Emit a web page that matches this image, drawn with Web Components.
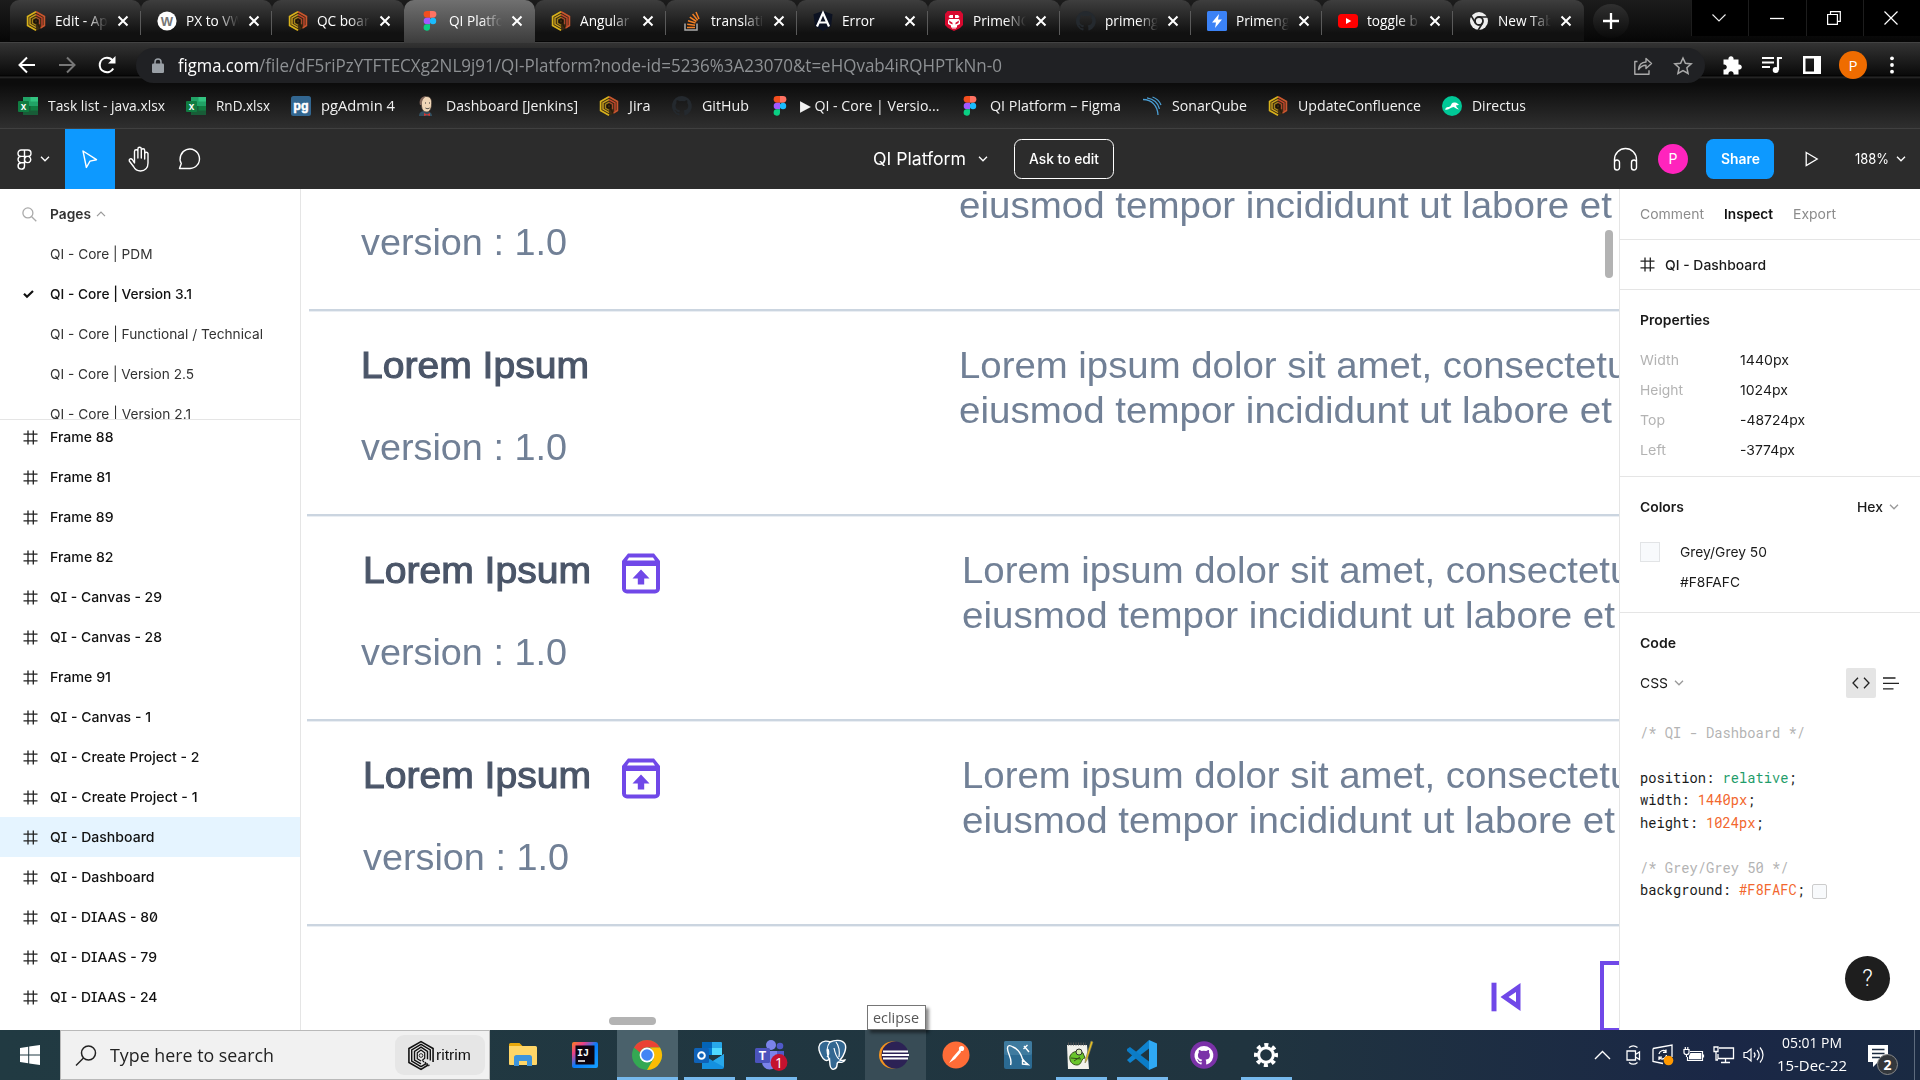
<!DOCTYPE html>
<html lang="en">
<head>
<meta charset="utf-8">
<title>QI Platform – Figma</title>
<style>
html,body{margin:0;height:100%;overflow:hidden;background:#fff}
</style>
</head>
<body>
<desktop-screen></desktop-screen>
<script>
const UI = '"Open Sans","Noto Sans",sans-serif';
const hexLogo = `<path d="M10 0l9 5v10l-9 5-9-5V5z" fill="#3a2a12"/><path d="M10 .8L1.6 5.4v9.2L10 19.2" fill="none" stroke="#d8b21c" stroke-width="1.7"/><path d="M10 .8l8.4 4.6v9.2l-4 2.3" fill="none" stroke="#c9562f" stroke-width="1.7"/><path d="M10 3.6L4 6.9v6.3l6 3.3" fill="none" stroke="#c9a01c" stroke-width="1.4"/><path d="M10 3.6l6 3.3v8" fill="none" stroke="#c8452f" stroke-width="1.4"/><path d="M10 6.2L6.4 8.2v4l3.6 2" fill="none" stroke="#a98a1a" stroke-width="1.1"/><path d="M10 6.2l3.6 2v5" fill="none" stroke="#b04c30" stroke-width="1.1"/><circle cx="10" cy="10.3" r="1.8" fill="none" stroke="#1a1208" stroke-width="1.2"/><path d="M11 12l3 5" stroke="#2a1a0a" stroke-width="1.4"/>`;
const figma = `<path d="M7 0h3v6.67H7a3.3 3.3 0 010-6.67z" fill="#f24e1e"/><path d="M10 0h3a3.3 3.3 0 010 6.67h-3z" fill="#ff7262"/><path d="M7 6.67h3v6.66H7a3.3 3.3 0 010-6.66z" fill="#a259ff"/><circle cx="13" cy="10" r="3.2" fill="#1abcfe"/><path d="M7 13.33h3V16.7a3.2 3.2 0 11-3-3.37z" fill="#0acf83"/>`;
const octo = c => `<path fill="${c}" d="M10 0a10 10 0 00-3.2 19.5c.5.1.7-.2.7-.5v-1.8c-2.8.6-3.4-1.2-3.4-1.2-.4-1.1-1.1-1.4-1.1-1.4-.9-.6.1-.6.1-.6 1 .1 1.5 1 1.5 1 .9 1.6 2.400 1.100 2.900.9.1-.7.4-1.100.6-1.400-2.200-.200-4.500-1.100-4.500-4.900 0-1.100.4-2 1-2.700-.1-.2-.4-1.200.1-2.600 0 0 .8-.3 2.700 1a9.500 9.500 0 015 0c1.900-1.300 2.700-1 2.700-1 .5 1.400.2 2.400.1 2.600.6.700 1 1.600 1 2.700 0 3.900-2.300 4.700-4.600 4.900.4.3.7.9.7 1.900V19c0 .3.2.6.7.5A10 10 0 0010 0z"/>`;
const line = (d, w=1.3, c='currentColor', x='') => `<path d="${d}" fill="none" stroke="${c}" stroke-width="${w}" ${x}/>`;
/* name: [width, height, viewBox, body] */
const ICONS = {
 hex:[20,20,'0 0 20 20',hexLogo],
 figma:[20,20,'0 0 20 20',figma],
 github:[20,20,'0 0 20 20',octo('#24292e')],
 wiki:[20,20,'0 0 20 20',`<circle cx="10" cy="10" r="9.6" fill="#fff"/><text x="10" y="14.600" text-anchor="middle" font-family="Liberation Sans" font-weight="700" font-size="13" fill="#777">W</text>`],
 stack:[20,20,'0 0 20 20',`<path d="M3 12.500V19h12v-6.500" fill="none" stroke="#aaa" stroke-width="1.500"/><path d="M5 16.500h8M5.200 13.300l7.800.9M6 9.800l7.500 2.200M7.800 6.200l6.600 4.300M10.600 3l5.100 6.200M14 1l3 7" stroke="#f48024" stroke-width="1.500"/>`],
 angular:[20,20,'0 0 20 20',`<path d="M10 0l9.500 3.300-1.500 12L10 20l-8-4.700L.5 3.300z" fill="#0c1222"/><path d="M4 15.500L10 2l6 13.500M6.300 11.500h7.400" fill="none" stroke="#fff" stroke-width="2.200"/>`],
 prime:[20,20,'0 0 20 20',`<path d="M3.500 0h13L19 3v11l-3 3-6 3-6-3-3-3V3z" fill="#d8092f"/><path d="M6 4h3v3H6L4.500 6zM11 4h3l1.500 2-1.500 1h-3zM5 8h10l1 2v3l-3 1.500v2h-1.500v1.500h-1v-1.500h-1V18h-1v-1.500H7v-2L4 13v-3z" fill="#fff"/><path d="M5 9.500l3.500 2.300v1.700L5.500 12zM15 9.500l-3.500 2.300v1.700l3-1.500z" fill="#d8092f"/>`],
 bolt:[20,20,'0 0 20 20',`<rect width="20" height="20" rx="1.500" fill="#3b82f6"/><path d="M12 3l-7 8.500h4L8 17l7-8.500h-4z" fill="#fff"/>`],
 youtube:[20,20,'0 0 20 20',`<rect y="3" width="20" height="14" rx="3.500" fill="#f00"/><path d="M8 7l5.300 3L8 13z" fill="#fff"/>`],
 chromeMono:[20,20,'0 0 20 20',`<circle cx="10" cy="10" r="9" fill="#eee"/><circle cx="10" cy="10" r="4" fill="#eee" stroke="#222" stroke-width="1.800"/><path d="M10 6h9M6.500 12L2 4.500M13.500 12L9 19.500" stroke="#222" stroke-width="1.600"/>`],
 excel:[20,20,'0 0 20 20',`<path d="M5 1h15v18H5z" fill="#21a366"/><path d="M12.500 1H20v4.500h-7.500z" fill="#33c481"/><path d="M5 10h15v9H5z" fill="#185c37"/><path d="M12.500 10H20v4.500h-7.500z" fill="#107c41"/><rect y="5" width="11" height="11" rx="1" fill="#107c41"/><text x="5.500" y="14" font-size="10" font-weight="700" text-anchor="middle" font-family="Liberation Sans" fill="#fff">x</text>`],
 pg:[20,20,'0 0 20 20',`<rect width="20" height="20" rx="2.500" fill="#326690"/><text x="10" y="13.800" font-size="12.500" font-weight="700" text-anchor="middle" font-family="Liberation Sans" fill="#fff" stroke="#fff" stroke-width=".5">pg</text>`],
 jenkins:[20,20,'0 0 20 20',`<path d="M3 20c0-4 3-5 6-5s7 1 7 5z" fill="#335061"/><path d="M5 6c0-4 3-6 6-5.500C15 1 16 4 15.500 9c-.3 4-2 7-4.500 7-3.500 0-5-2-5.500-6z" fill="#f0d6b7" stroke="#3c342c" stroke-width=".7"/><path d="M4 9C2.500 3 6 0 10.500.2 7.500 1.800 6 4 5.500 9z" fill="#81665a"/><path d="M8 17l3 1.500 3-1.500v3l-3-1-3 1z" fill="#d33833"/><path d="M9 7h1M13 7h1M9.500 12c1 .8 3 .8 4 0" stroke="#333" fill="none"/>`],
 sonar:[20,20,'0 0 20 20',line('M1 3.500C10 3.500 15.500 10 16 19M5 1.800c6 1 11 5 12.500 11M10.500 1C14.500 2.500 17.500 5 19 9',1.3,'#4b9fd5')],
 directus:[20,20,'0 0 20 20',`<circle cx="10" cy="10" r="10" fill="#00c897"/><path d="M3 13.500c2-4 4-1.500 5.500-3.500C9.500 8 10 6 13 6.500c2 0 2.500 1.500 4 2-1 1-2 .5-3 1 .5 2 1.500 2.500 3 4-3-.5-4-2-5.500-2.500C9 11 7 14.500 3 13.500z" fill="#fff"/>`],
 close:[12,12,'0 0 12 12',line('M1.500 1.500l9 9M10.500 1.500l-9 9',2,'#fff')],
 back:[18,18,'0 0 18 18',line('M17 9H2M9 1.500L1.500 9 9 16.500',2,'#fff')],
 fwd:[18,18,'0 0 18 18',line('M1 9h15M9 1.500L16.500 9 9 16.500',2,'#777')],
 reload:[18,18,'0 0 18 18',line('M15.200 12.500A7.200 7.200 0 119 1.800c2.600 0 4.600 1.200 6 3',2.100,'#fff')+`<path d="M17.500 0v7.500H10z" fill="#fff"/>`],
 lock:[12,16,'0 0 12 16',`<rect x="0" y="5.500" width="12" height="9.500" rx="1.300" fill="#9aa0a6"/>`+line('M3 6V4a3 3 0 016 0v2',1.5,'#9aa0a6')],
 share:[20,20,'0 0 20 20',line('M4.500 5.500H1.800v12.700H16v-4M5.500 13.500C6 8.500 9 6.200 13 6V2.500l5.500 5-5.500 5V9.300c-3.500 0-5.500 1.200-7.500 4.200z',1.4,'#aaa','stroke-linejoin="round"')],
 star:[20,20,'0 0 20 20',line('M10 2l2.400 5.300 5.800.6-4.300 3.900 1.200 5.700L10 14.600l-5.100 2.900 1.200-5.700L1.800 7.900l5.800-.6z',1.5,'#aaa')],
 puzzle:[20,20,'0 0 20 20',`<path d="M1.500 4.500h5a2.600 2.600 0 115 0h5v5a2.600 2.600 0 110 5v5h-5a2.600 2.600 0 10-5 0h-5v-5a2.600 2.600 0 100-5z" fill="#fff"/>`],
 music:[20,18,'0 0 20 18',line('M0 2h12M0 6.500h12M0 11h8',2,'#fff')+line('M16 14V2h4',2.200,'#fff')+`<circle cx="13.700" cy="14" r="3" fill="#fff"/>`],
 side:[18,18,'0 0 18 18',`<path d="M0 0h18v18H0zM2.500 2.500v13H11v-13z" fill="#fff" fill-rule="evenodd"/>`],
 dots:[6,18,'0 0 6 18',`<circle cx="3" cy="2.300" r="1.900" fill="#fff"/><circle cx="3" cy="9" r="1.900" fill="#fff"/><circle cx="3" cy="15.700" r="1.900" fill="#fff"/>`],
 plus:[16,16,'0 0 16 16',line('M8 0v16M0 8h16',2.300,'#fff')],
 wdown:[14,8,'0 0 14 8',line('M.5.5L7 7 13.500.5',1.100,'#eee')],
 wmin:[14,14,'0 0 14 14',line('M0 7.500h14',1.300,'#fff')],
 wmax:[14,14,'0 0 14 14',line('M.6 3.500h9.800v9.800H.6zM3.500 3.500V.6h9.800v9.800h-3',1.200,'#fff')],
 wclose:[14,14,'0 0 14 14',line('M.5.5l13 13M13.500.5l-13 13',1.200,'#fff')],
 fmenu:[15,21,'0 0 15 21',line('M7.500 1H4.200a3.200 3.200 0 000 6.400h3.300zM7.500 1h3.300a3.200 3.200 0 010 6.400H7.500zM7.500 7.400H4.200a3.100 3.100 0 000 6.300h3.300zM10.700 7.400a3.100 3.100 0 11-.1 0zM7.500 13.700H4.200a3.200 3.200 0 103.300 3.200z',1.4,'#fff')],
 chev:[10,6,'0 0 10 6',line('M1 .8l4 4 4-4',1.3)],
 chevup:[10,6,'0 0 10 6',line('M1 5.200l4-4 4 4',1.200)],
 cursor:[16,19,'0 0 16 19',line('M1 1l13.500 8.700-6.500 1.400L4.400 17.500z',1.400,'#fff','stroke-linejoin="round"')],
 hand:[24,26,'0 0 24 26',line('M6.500 15V5.500a1.700 1.700 0 013.400 0V12 3a1.700 1.700 0 013.400 0v9-7.500a1.700 1.700 0 013.400 0V13 7.500a1.700 1.700 0 013.300 0V17c0 5-3 8-7.500 8-3.500 0-5.500-1.500-7-4.500L1.300 15c-.6-2 1.700-3 3-1.500l2.200 3.500z',1.400,'#fff','stroke-linejoin="round"')],
 comment:[24,22,'0 0 24 22',line('M1.500 20.500l1.800-5A9.700 9.700 0 1112 20.500z',1.400,'#fff','stroke-linejoin="round"')],
 phones:[25,23,'0 0 25 23',line('M1.500 19v-7.500a11 11 0 0122 0V19M1.500 16.500v-2a2.500 2.500 0 015 0v5a2.500 2.500 0 01-5 0zM23.500 16.500v-2a2.500 2.500 0 00-5 0v5a2.500 2.500 0 005 0z',1.400,'#fff')],
 play:[14,16,'0 0 14 16',line('M1.200 1.500l11 6.500-11 6.500z',1.300,'#fff')],
 hash:[15,15,'0 0 15 15',line('M5 .5v14M10.300.5v14M.5 4.200h14M.5 10.800h14',1.300,'#222')],
 search:[15,15,'0 0 15 15',line('M9.700 9.700l4.600 4.600',1.300,'#aaa')+`<circle cx="5.900" cy="5.900" r="5" fill="none" stroke="#aaa" stroke-width="1.300"/>`],
 check:[11,8,'0 0 11 8',line('M1 3.800l3 3L10 1',2.200,'#111')],
 code:[18,12,'0 0 18 12',line('M6 .8L1 6l5 5.200M12 .8L17 6l-5 5.200',1.300,'#222')],
 list:[16,13,'0 0 16 13',line('M0 1h12.500M0 6.300h16M0 11.800h10.500',1.300,'#222')],
 archive:[40,41,'0 0 40 41',`<path d="M7 .5h26l6 7.500v27.500a5 5 0 01-5 5H6a5 5 0 01-5-5V8zM5 13v22.500c0 .6.400 1 1 1h28c.6 0 1-.4 1-1V13zM8 4.500L6 7.500h28l-2-3z" fill="#7048e8" fill-rule="evenodd"/><path d="M20 16.500l8.500 9h-5.300v6h-6.400v-6h-5.300z" fill="#7048e8"/>`],
 prev:[30,30,'0 0 30 30',`<path d="M.5.700h5v28.600h-5z" fill="#7048e8"/><path d="M29.500 1v28L9.500 15zM25 10l-7.500 5L25 20z" fill="#7048e8" fill-rule="evenodd"/>`],
 win:[20,20,'0 0 20 20',`<path d="M0 2.900l8.200-1.200v7.700H0zM9.200 1.500L20 0v9.400H9.200zM0 10.500h8.200v7.800L0 17.100zM9.200 10.500H20V20L9.200 18.500z" fill="#fff"/>`],
 magnify:[22,21,'0 0 22 21',`<circle cx="13.500" cy="8" r="7" fill="none" stroke="#222" stroke-width="1.500"/>`+line('M8.500 13L1 20.500',1.5,'#222')],
 ritrim:[26,31,'0 0 28 32',line('M22 26l-8 5-13-7.500V8.500L14 1l13 7.500V23',1.700,'#111')+line('M20 24.500l-6 3.500L4 22V10l10-6 10 6v11.500',1.500,'#111')+line('M14 25l-7-4v-9.500L14 7l7 4.500V20',1.500,'#111')+line('M14 22l-4-2.500v-6.500l4-3 4 3V19l-3 2.500',1.300,'#111')+`<circle cx="14" cy="16" r="2" fill="none" stroke="#111" stroke-width=".9"/>`+line('M16 22l7 5',1.800,'#111','stroke-dasharray="1.500 1"')],
 explorer:[28,26,'0 0 28 26',`<path d="M0 2.500A1.500 1.500 0 011.500 1h9l3 3H0z" fill="#e8a90c"/><path d="M0 4h26.500A1.500 1.500 0 0128 5.500V22a1 1 0 01-1 1H1a1 1 0 01-1-1z" fill="#ffd667"/><path d="M5 24V15.500A2.500 2.500 0 017.500 13h13a2.500 2.500 0 012.500 2.500V24h-5v-5h-8v5z" fill="#3d94dc"/>`],
 idea:[28,28,'0 0 28 28',`<defs><linearGradient id="g" x1="0" y1="0" x2="1" y2="1"><stop offset="0" stop-color="#fc801d"/><stop offset=".25" stop-color="#e8408a"/><stop offset=".5" stop-color="#087cfa"/><stop offset="1" stop-color="#16a0ff"/></linearGradient></defs><rect x="1" y="1" width="26" height="26" rx="2" fill="url(#g)"/><rect x="4.500" y="4.500" width="19" height="19" fill="#0c0410"/><text x="6" y="14.500" font-size="10" font-weight="700" font-family="Liberation Mono" fill="#fff">IJ</text><path d="M7 20h7" stroke="#fff" stroke-width="1.500"/>`],
 chrome:[30,30,'0 0 30 30',`<circle cx="15" cy="15" r="15" fill="#34a853"/><path d="M15 0a15 15 0 0113 7.500H15a7.500 7.500 0 00-7 5L2 7.500A15 15 0 0115 0z" fill="#ea4335"/><path d="M28 7.500A15 15 0 0115 30l6.500-11.200c1.500-3.500.5-8.500-3.500-11.300z" fill="#fbbc04"/><circle cx="15" cy="15" r="7.400" fill="#fff"/><circle cx="15" cy="15" r="5.800" fill="#4285f4"/>`],
 outlook:[30,28,'0 0 30 28',`<path d="M8 1h19a1 1 0 011 1v12H8z" fill="#28a8ea"/><path d="M8 1h10v6H8z" fill="#0364b8"/><path d="M18 7h10v7H18z" fill="#50d9ff"/><path d="M8 7h10v7H8z" fill="#0078d4"/><path d="M8 13l11 7 11-7v13a2 2 0 01-2 2H8z" fill="#1490df"/><path d="M30 13v13L19 20z" fill="#28a8ea"/><rect y="7" width="15" height="15" rx="1.500" fill="#0f62b8"/><circle cx="7.500" cy="14.500" r="3.300" fill="none" stroke="#fff" stroke-width="2"/>`],
 teams:[34,32,'0 0 34 32',`<circle cx="17" cy="6" r="5" fill="#7b83eb"/><circle cx="26" cy="7" r="3.300" fill="#5059c9"/><path d="M20 12h10v9a5 5 0 01-10 3z" fill="#5059c9"/><path d="M8 12h15v11a7.500 7.500 0 01-15 0z" fill="#7b83eb"/><rect x="1" y="9" width="15" height="15" rx="1.500" fill="#4b53bc"/><text x="8.500" y="21" text-anchor="middle" font-size="12" font-weight="700" font-family="Liberation Sans" fill="#fff">T</text><circle cx="25" cy="23.500" r="8.400" fill="#c4122f"/><text x="25" y="28.500" text-anchor="middle" font-size="14" font-family="Open Sans" fill="#fff">1</text>`],
 postgres:[30,30,'0 0 30 30',`<path d="M3 4c3-4 8-3 10-2 4-2 12-3 15 2 2 4-1 12-5 16 2 1 4 0 5 0-1 2-4 3-6 2-1 0-2 1-2 3 0 4-6 7-7 0l-.5-6c-3 3-6 1-8-3S.5 8 3 4z" fill="#336791" stroke="#fff" stroke-width="1.400"/>`+line('M13 2c-4 5-3 12-1 17M19 2c3 4 4 8 3 15M10 17c3-3 1-8 1-8M17 8c1 5 2 9 5 11',1.200,'#fff')],
 eclipse:[30,28,'0 0 30 28',`<circle cx="13.500" cy="14" r="13.500" fill="#f7941e"/><circle cx="16" cy="14" r="13.500" fill="#2c2255"/><path d="M4 10.500h25M3 14h27M4 17.500h25" stroke="#fff" stroke-width="1.900"/>`],
 postman:[28,28,'0 0 28 28',`<circle cx="14" cy="14" r="13.500" fill="#ff6c37"/><path d="M18 8l-7 8-4 6 6-4 6-7z" fill="#fff"/><circle cx="19.500" cy="7.500" r="2.600" fill="#fff"/>`],
 mysql:[28,28,'0 0 28 28',`<rect width="28" height="28" rx="2" fill="#2b6a92"/><rect width="28" height="14" rx="2" fill="#3f7b9f"/>`+line('M6.500 24C9 18 3 12 3.500 7c0-3 2.500-3 5.500-1 5 2 8 7 9.500 12 2 3 3.500 4 5.500 5.500l-5.500-.5v-4M20 5l5 6M19.500 8l4-4',1.400,'#fff')],
 npp:[28,29,'0 0 28 29',`<path d="M1 4h20l2 24H2z" fill="#f2f2ec"/><path d="M2 3h18" stroke="#555" stroke-width="3" stroke-dasharray="1 1.500"/><path d="M4 15c3-6 9-5 13-3l2 5c-4 0-3 7-8 7s-8-4-7-9z" fill="#69c52b" stroke="#335018"/><circle cx="13" cy="11" r="3" fill="#cfe8a5" stroke="#333"/><path d="M5 17l10 1M8 20l6-4" stroke="#335018"/><path d="M27 1l-6 18-2 3 .5-4L25 0z" fill="#e8c020" stroke="#775" stroke-width=".6"/>`],
 vscode:[30,30,'0 0 30 30',`<path d="M22 0L0 20l3 3L22 8.500z" fill="#0f83cf"/><path d="M0 9l3-2 19 14.500V30L0 11z" fill="#0b7cc7"/><path d="M22 0l8 3.500v23L22 30z" fill="#2fa9f5"/>`],
 ghdesk:[28,28,'0 0 28 28',`<circle cx="14" cy="14" r="13.800" fill="#7b32a8"/><g transform="translate(4.500 5) scale(.95)">${octo('#fff')}</g>`],
 gear:[24,24,'0 0 24 24',`<circle cx="12" cy="12" r="7.300" fill="none" stroke="#fff" stroke-width="3"/><circle cx="12" cy="12" r="10" fill="none" stroke="#fff" stroke-width="4" stroke-dasharray="3.900 3.950" transform="rotate(-11 12 12)"/>`],
 tup:[17,10,'0 0 17 10',line('M1 9l7.500-7.500L16 9',1.400,'#fff')],
 tcam:[15,20,'0 0 15 20',line('M1 6h8.500v9H1zM9.500 9.500L13.500 7v7.500l-4-2.500M3 2.500C5.500.5 9 .5 11.500 2.500M3 17.500c2.500 2 6 2 8.500 0',1.300,'#fff')],
 tupd:[22,22,'0 0 22 22',line('M1 4.500L20 1v12M1 4.500V17.500l10 2M7 10a4.300 4.300 0 017-2.500M14 5.500v2.800h-3M14.500 11a4.300 4.300 0 01-7 3M7 16v-2.800h3',1.300,'#fff')+`<circle cx="16.500" cy="16.500" r="4.800" fill="#ff9800"/>`],
 tbat:[22,18,'0 0 22 18',line('M7 5.500h12.500v9H4.500V11M20.500 8.500v3M1 3.500h5v3c0 1.500-1 2-2.500 2S1 8 1 6.500zM2.300 1v2.500M4.800 1v2.500M3.500 8.500V11',1.200,'#fff')+`<path d="M7.500 7h10.800v6.200H6V10z" fill="#fff"/>`],
 tnet:[22,18,'0 0 22 18',line('M6 2h14.500v10.500H5V8M12.500 12.500V16M8 16.500h9M1 1h4v4.500H1zM3 5.500V14h2',1.300,'#fff')],
 tvol:[22,18,'0 0 22 18',line('M1 6.500h3L8 3v12l-4-3.500H1zM11 6.500c1.300 1.500 1.300 3.500 0 5M14 4c2.600 3 2.600 7 0 10M17 1.500c4 4.500 4 10.500 0 15',1.200,'#fff')],
 note:[21,23,'0 0 21 23',`<path d="M0 0h20v17H10l-5 5v-5H0z" fill="#fff"/><path d="M4 4.500h12.500M4 8.500h12.500M4 12.500h8" stroke="#1b2a3f" stroke-width="1.300"/>`],
};
const def = (tag, fn, after) => customElements.define(tag, class extends HTMLElement {
  connectedCallback() {
    if (this.shadowRoot) return;
    this.attachShadow({mode:'open'}).innerHTML = fn(this);
    if (after) after(this);
  }
});
const a = (e, n, d='') => e.getAttribute(n) ?? d;

def('ui-icon', e => { const [w,h,v,b] = ICONS[a(e,'name')];
  return `<style>:host{display:inline-block;flex:none;width:${w}px;height:${h}px}svg{display:block;overflow:visible}</style><svg width="${w}" height="${h}" viewBox="${v}">${b}</svg>`; });

/* One line of text set to a given advance width (w) or to a horizontal ratio (k). */
def('fit-text', () => `<style>:host{display:block;flex:none;white-space:nowrap}span{display:inline-block;transform-origin:0 50%}</style><span><slot></slot></span>`, e => {
  const s = e.shadowRoot.querySelector('span'), n = s.getBoundingClientRect().width;
  const w = e.hasAttribute('w') ? +a(e,'w') : n * +a(e,'k',1);
  e.style.width = w + 'px';
  s.style.transform = `scaleX(${w/n})`;
});

def('browser-tab', e => `<style>
:host{display:block;flex:none;width:131.2px;height:41px;box-sizing:border-box;position:relative}
.t{box-sizing:border-box;height:41px;border-radius:9px 9px 0 0;background:linear-gradient(#3e3e3e,#111 80%);display:flex;align-items:center;padding-left:16px;border-right:1px solid transparent;color:#fff;font:15px/20px ${UI}}
:host([active]) .t{background:linear-gradient(#707070,#3c3c3c);height:43px;border-radius:10px 10px 0 0;padding-bottom:2px}
.n{width:53px;margin:-2px 0 0 9px;overflow:hidden;-webkit-mask:linear-gradient(90deg,#000 60%,transparent 100%)}
ui-icon[name=close]{margin-left:9px}
i{position:absolute;right:0;top:11px;width:1px;height:24px;background:#5a5a5a}
:host([active]) i,:host([nosep]) i{display:none}
</style><div class="t"><ui-icon name="${a(e,'icon')}"></ui-icon><div class="n"><fit-text k=".91">${a(e,'label')}</fit-text></div><ui-icon name="close"></ui-icon></div><i></i>`);

def('chrome-tabs', () => `<style>
:host{display:flex;background:linear-gradient(#1c1c1c,#060606);padding-left:10px;border-bottom:1px solid #434343;box-sizing:border-box;height:43px}
.plus{width:36px;height:34px;border-radius:50%;background:linear-gradient(#303030,#0a0a0a);display:grid;place-items:center;margin:4px 0 0 9px}
.win{margin-left:auto;display:flex;background:#000;height:36px}
.win div{width:57.2px;box-sizing:border-box;border-left:1px solid #1d1d1d;display:grid;place-items:center}
.win ui-icon{margin-left:-2px}
</style>
${[['hex','Edit - App'],['wiki','PX to VW'],['hex','QC board','nosep'],['figma','QI Platform','active'],['hex','Angular'],['stack','translation'],['angular','Error'],['prime','PrimeNG'],['github','primeng'],['bolt','Primeng'],['youtube','toggle b'],['chromeMono','New Tab','nosep']].map(([i,l,x=''])=>`<browser-tab icon="${i}" label="${l}" ${x}></browser-tab>`).join('')}
<div class="plus"><ui-icon name="plus"></ui-icon></div>
<div class="win"><div><ui-icon name="wdown"></ui-icon></div><div><ui-icon name="wmin"></ui-icon></div><div><ui-icon name="wmax"></ui-icon></div><div><ui-icon name="wclose"></ui-icon></div></div>`);

def('address-bar', () => `<style>
:host{display:flex;height:41px;position:relative;align-items:flex-start;padding:5px 0 0 18px;box-sizing:border-box;background:linear-gradient(#333 0,#0a0a0a 32px,#000 33px,#2c2c2c 34px,#0c0c0c 36px,#0c0c0c)}
.nav{display:flex;gap:22px;height:34px;align-items:center;width:118px}
.pill{width:1569px;height:35px;border-radius:18px;background:#202124;display:flex;align-items:center;box-sizing:border-box;padding:0 12px 0 16px;font:17.500px/24px ${UI};color:#8d9093}
.pill fit-text{margin-top:-2px}
.pill fit-text:first-of-type{margin-left:14px;color:#fff}
.r{margin-left:auto;display:flex;gap:20px}
.x{display:flex;align-items:center;height:34px;margin-left:17px}
.p{width:28px;height:28px;border-radius:50%;background:#ef6c00;color:#fff;font:15px/28px ${UI};text-align:center}
</style><div class="nav"><ui-icon name="back"></ui-icon><ui-icon name="fwd"></ui-icon><ui-icon name="reload"></ui-icon></div>
<div class="pill"><ui-icon name="lock"></ui-icon><fit-text w="81">figma.com</fit-text><fit-text w="743">/file/dF5riPzYTFTECXg2NL9j91/QI-Platform?node-id=5236%3A23070&amp;t=eHQvab4iRQHPTkNn-0</fit-text><div class="r"><ui-icon name="share"></ui-icon><ui-icon name="star"></ui-icon></div></div>
<div class="x"><ui-icon name="puzzle"></ui-icon><ui-icon name="music" style="margin-left:20px"></ui-icon><ui-icon name="side" style="margin-left:21px"></ui-icon><div class="p" style="margin-left:18px">P</div><ui-icon name="dots" style="margin-left:22px"></ui-icon></div>`);

def('bookmarks-bar', () => `<style>
:host{display:flex;gap:21px;height:45px;box-sizing:border-box;padding:0 18px;align-items:center;background:linear-gradient(#0c0c0c,#2f2f2f);border-bottom:1px solid #404040;font:15px/22px ${UI};color:#f1f1f1}
div{display:flex;gap:10px;align-items:center}
fit-text{margin-top:-2px}
</style>${[['excel','Task list - java.xlsx',117],['excel','RnD.xlsx',54],['pg','pgAdmin 4',74],['jenkins','Dashboard [Jenkins]',132],['hex','Jira',21.5],['github','GitHub',47],['figma','<span style="font-family:DejaVu Sans">▶</span> QI - Core | Versio...',139.5],['figma','QI Platform – Figma',131],['sonar','SonarQube',75],['hex','UpdateConfluence',123],['directus','Directus',54]].map(([i,l,w])=>`<div><ui-icon name="${i}"></ui-icon><fit-text w="${w}">${l}</fit-text></div>`).join('')}`);

def('figma-toolbar', () => `<style>
:host{display:flex;height:60px;background:#2c2c2c;color:#fff;font:14px/20px Inter,sans-serif}
.l,.m,.r{display:flex;align-items:center}
.l{width:873px}.r{flex:1;justify-content:flex-end}
.cur{width:50px;height:60px;background:#0d99ff;display:grid;place-items:center;margin-left:15px}
.b{box-sizing:border-box;height:40px;border-radius:7.500px;display:grid;place-items:center;font-weight:500;padding-bottom:1px}
.ask{width:100px;border:1.300px solid #fff;margin-left:26px}
.share{width:68px;background:#0d99ff;margin-left:18px;font-weight:600}
.p{width:30px;height:30px;border-radius:50%;background:#ff24bd;text-align:center;line-height:30px;margin-left:20px}
</style>
<div class="l"><ui-icon name="fmenu" style="margin-left:17px"></ui-icon><ui-icon name="chev" style="margin-left:8px"></ui-icon><div class="cur"><ui-icon name="cursor"></ui-icon></div><ui-icon name="hand" style="margin-left:13px"></ui-icon><ui-icon name="comment" style="margin-left:26px"></ui-icon></div>
<div class="m"><fit-text w="93" style="font-size:17.500px">QI Platform</fit-text><ui-icon name="chev" style="margin-left:12px"></ui-icon><div class="b ask"><fit-text w="70">Ask to edit</fit-text></div></div>
<div class="r"><ui-icon name="phones"></ui-icon><div class="p">P</div><div class="b share"><fit-text w="39">Share</fit-text></div><ui-icon name="play" style="margin-left:31px"></ui-icon><fit-text w="34" style="margin-left:36px">188%</fit-text><ui-icon name="chev" style="margin:0 14px 0 7px"></ui-icon></div>`);

def('page-row', e => `<style>
:host{display:flex;height:40px;align-items:center;color:#333}
:host([current]){color:#111;font-weight:500}
div{width:50px;padding-left:23px;box-sizing:border-box;display:flex}
</style><div>${e.hasAttribute('current')?'<ui-icon name="check"></ui-icon>':''}</div><fit-text w="${a(e,'w')}"><slot></slot></fit-text>`);
def('layer-row', e => `<style>
:host{display:flex;height:40px;align-items:center;color:#111;font-weight:500;font-feature-settings:"cv08","zero"}
:host([selected]){background:#e5f4ff}
ui-icon{margin:0 12px 0 23px}
</style><ui-icon name="hash"></ui-icon><fit-text w="${a(e,'w')}"><slot></slot></fit-text>`);

def('left-panel', () => `<style>
:host{display:flex;flex-direction:column;width:300px;border-right:1px solid #e5e5e5;background:#fff;font:13.750px/20px Inter,sans-serif}
.pages{height:230px;overflow:hidden;border-bottom:1px solid #e5e5e5;flex:none}
.h{display:flex;align-items:center;height:50px;color:#333;font-weight:600;padding:0 0 0 22px;box-sizing:border-box;margin-bottom:-5px}
.layers{flex:1;overflow:hidden}.in{margin-top:-3px}
</style>
<div class="pages"><div class="h"><ui-icon name="search"></ui-icon><fit-text w="41" style="margin-left:13px">Pages</fit-text><ui-icon name="chevup" style="margin-left:5px;color:#999"></ui-icon></div>
<page-row w="102.500">QI - Core | PDM</page-row><page-row w="142" current>QI - Core | Version 3.1</page-row><page-row w="213">QI - Core | Functional / Technical</page-row><page-row w="144">QI - Core | Version 2.5</page-row><page-row w="141">QI - Core | Version 2.1</page-row></div>
<div class="layers"><div class="in">${[['Frame 88',63.5],['Frame 81',61],['Frame 89',63.5],['Frame 82',63.5],['QI - Canvas - 29',112],['QI - Canvas - 28',112],['Frame 91',61],['QI - Canvas - 1',101],['QI - Create Project - 2',149.5],['QI - Create Project - 1',147.5],['QI - Dashboard',104.5,1],['QI - Dashboard',104.5],['QI - DIAAS - 80',108],['QI - DIAAS - 79',107],['QI - DIAAS - 24',107.5]].map(([t,w,s])=>`<layer-row w="${w}" ${s?'selected':''}>${t}</layer-row>`).join('')}</div></div>`);

def('canvas-row', e => { const x=+a(e,'tx'), v=+a(e,'vx'), d=+a(e,'dx'), m=+a(e,'lx',6);
 return `<style>
:host{display:block;height:205px;box-sizing:border-box;border:0;font:37.600px/45px "Liberation Sans",Arial,sans-serif;color:#718096}
.ln{height:2px;background:#cbd5e0;border-bottom:1px solid #eaeef3;margin-left:${m}px}
.g{display:flex;padding-top:31px}
.c{width:${d}px;flex:none}
.t{display:flex;color:#4a5568;-webkit-text-stroke:1.100px #4a5568;height:45px;margin-left:${x}px}
ui-icon{margin:5px 0 0 30px}
.v{margin:37px 0 0 ${v}px}
</style><div class="ln"></div><div class="g"><div class="c"><div class="t"><fit-text w="228">Lorem Ipsum</fit-text>${e.hasAttribute('archive')?'<ui-icon name="archive"></ui-icon>':''}</div><div class="v"><fit-text w="206">version : 1.0</fit-text></div></div><div><fit-text w="682">Lorem ipsum dolor sit amet, consectetur</fit-text><fit-text w="653">eiusmod tempor incididunt ut labore et</fit-text></div></div>`; });

def('design-canvas', () => `<style>
:host{display:block;position:relative;width:1318px;overflow:hidden;background:#fff}
.in{margin-top:-85px}
.end{height:2px;background:#cbd5e0;border-bottom:1px solid #eaeef3;margin-left:6px}
.pg{position:absolute;left:1190px;top:793px}
.box{position:absolute;left:1299px;top:772px;width:120px;height:63px;border:4px solid #7048e8}
.sb{position:absolute;background:#b3b3b3;border-radius:4px}
</style><div class="in"><canvas-row tx="59.500" vx="60" dx="658"></canvas-row><canvas-row tx="59.500" vx="60" dx="658" lx="8"></canvas-row><canvas-row archive tx="62" vx="60" dx="660.500"></canvas-row><canvas-row archive tx="62" vx="62" dx="660.500"></canvas-row><div class="end"></div></div>
<ui-icon class="pg" name="prev"></ui-icon><div class="box"></div>
<div class="sb" style="left:1304px;top:41px;width:8px;height:48px"></div><div class="sb" style="left:308px;top:828px;width:47px;height:8px"></div>`);

def('prop-row', e => `<style>:host{display:flex;height:30px;align-items:center;color:#1a1a1a}.k{width:100px;color:#b3b3b3}</style><div class="k"><fit-text w="${a(e,'kw')}">${a(e,'k')}</fit-text></div><fit-text w="${a(e,'w')}"><slot></slot></fit-text>`);

def('inspect-panel', () => `<style>
:host{display:block;position:relative;width:300px;border-left:1px solid #e5e5e5;background:#fff;font:13.750px/20px Inter,sans-serif;color:#1a1a1a}
.s{border-bottom:1px solid #e5e5e5;padding:0 20px;box-sizing:border-box}
.f{display:flex;align-items:center}
.b{font-weight:600}
.tabs{height:51px;gap:20px;color:#8c8c8c}
.sw{width:18px;height:18px;border:1px solid #e2e4e6;background:#f8fafc;margin-right:20px}
.btn{width:30px;height:30px;border-radius:2px;background:#e5e5e5;display:grid;place-items:center;margin-left:auto}
pre{margin:23.500px 0 0;font:13.750px/22.500px "Roboto Mono","Liberation Mono",monospace;color:#1a1a1a}
pre i{font-style:normal;color:#b3b3b3}pre b{font-weight:400;color:#f2672e}pre u{text-decoration:none;color:#1f9d6b}
pre s{display:inline-block;width:13px;height:13px;border:1px solid #ccc;border-radius:2px;background:#f8fafc;margin-left:7px;vertical-align:-4px}
.q{position:absolute;right:30px;bottom:29px;width:45px;height:45px;border-radius:50%;background:#1e1e1e;color:#fff;text-align:center;font:300 23px/45px Roboto,"Open Sans",sans-serif}
</style>
<div class="s f tabs"><fit-text w="64">Comment</fit-text><fit-text class="b" w="49" style="color:#111">Inspect</fit-text><fit-text w="43">Export</fit-text></div>
<div class="s f" style="height:50px"><ui-icon name="hash"></ui-icon><fit-text w="101" style="margin-left:10px;font-weight:500">QI - Dashboard</fit-text></div>
<div class="s" style="height:187px;padding-top:20px"><fit-text class="b" w="70" style="margin-bottom:15px">Properties</fit-text>
<prop-row k="Width" kw="39" w="49">1440px</prop-row><prop-row k="Height" kw="43" w="48">1024px</prop-row><prop-row k="Top" kw="25" w="65">-48724px</prop-row><prop-row k="Left" kw="26" w="55">-3774px</prop-row></div>
<div class="s" style="height:136px;padding-top:20px"><div class="f"><fit-text class="b" w="44">Colors</fit-text><fit-text w="26" style="margin-left:auto;font-weight:500">Hex</fit-text><ui-icon name="chev" style="color:#999;margin:0 1px 0 6px"></ui-icon></div>
<div class="f" style="height:30px;margin-top:20px"><div class="sw"></div><fit-text w="87">Grey/Grey 50</fit-text></div><div class="f" style="height:30px;padding-left:40px"><fit-text w="60">#F8FAFC</fit-text></div></div>
<div style="padding:20px 20px 0"><fit-text class="b" w="36">Code</fit-text>
<div class="f" style="height:30px;margin-top:15px"><fit-text w="28">CSS</fit-text><ui-icon name="chev" style="color:#999;margin-left:6px"></ui-icon><div class="btn"><ui-icon name="code"></ui-icon></div><ui-icon name="list" style="margin:0 1px 0 7px"></ui-icon></div>
<pre><i>/* QI - Dashboard */</i>

position: <u>relative</u>;
width: <b>1440px</b>;
height: <b>1024px</b>;

<i>/* Grey/Grey 50 */</i>
background: <b>#F8FAFC</b>;<s></s></pre></div><div class="q">?</div>`);

def('task-bar', () => `<style>
:host{display:flex;position:relative;height:50px;background:linear-gradient(90deg,#213a42,#20343f 65%,#1a2746 90%,#1a2a42);color:#fff;font-family:${UI}}
.w{width:60px;display:grid;place-items:center}
.s{width:430px;box-sizing:border-box;border:1px solid #b9b9b9;background:#f1f1f1;display:flex;align-items:center;padding:0 4px 0 14px;color:#222;font-size:18.750px;line-height:26px}
.rt{margin-left:auto;width:90px;height:40px;border-radius:9px;background:#e6e6e6;display:flex;align-items:center;gap:2px;padding-left:13px;box-sizing:border-box;font-size:15px;color:#111}
.apps{display:flex;gap:.9px;margin-left:3.500px}
.a{width:61px;display:grid;place-items:center;position:relative;box-sizing:border-box}
.a ui-icon{margin-left:-2px}
.on{background:linear-gradient(#76b9ed,#76b9ed) 50% 100%/51px 3px no-repeat}
.act{background:linear-gradient(#76b9ed,#76b9ed) 50% 100%/61px 3px no-repeat,#4a616b}
.hov{background:#384c56}
.tray{margin-left:auto;display:flex;align-items:center;padding-right:5px}
.clock{margin-left:12px;width:70px;display:flex;flex-direction:column;align-items:center;font-size:15px;line-height:23px;padding-bottom:2px}
.n{position:relative;margin-left:21px;width:46px;height:23px;margin-top:2px}
.bd{position:absolute;left:9px;top:9px;width:19px;height:19px;border-radius:50%;border:1px solid #888;background:#33373c;font:700 14px/19px ${UI};text-align:center}
.tip{position:absolute;left:867px;top:-25px;height:23px;border:1px solid #767676;background:#fff;box-shadow:3px 3px 3px rgba(0,0,0,.45);color:#575757;font-size:15px;line-height:22px;padding-left:5px;width:52px}
.end{width:1px;height:50px;background:#5d6b7d}
</style>
<div class="w"><ui-icon name="win"></ui-icon></div>
<div class="s"><ui-icon name="magnify"></ui-icon><fit-text w="164" style="margin-left:13px">Type here to search</fit-text><div class="rt"><ui-icon name="ritrim"></ui-icon><fit-text w="35" style="font-family:'Liberation Sans'">ritrim</fit-text></div></div>
<div class="apps">${[['explorer'],['idea'],['chrome','act'],['outlook','on'],['teams','on'],['postgres'],['eclipse','hov'],['postman'],['mysql'],['npp','on'],['vscode','on'],['ghdesk'],['gear','on']].map(([n,c=''])=>`<div class="a ${c}"><ui-icon name="${n}"></ui-icon></div>`).join('')}</div>
<div class="tray"><ui-icon name="tup"></ui-icon><ui-icon name="tcam" style="margin-left:15px"></ui-icon><ui-icon name="tupd" style="margin-left:11px"></ui-icon><ui-icon name="tbat" style="margin-left:9px"></ui-icon><ui-icon name="tnet" style="margin-left:8px"></ui-icon><ui-icon name="tvol" style="margin-left:8px"></ui-icon>
<div class="clock"><fit-text w="60">05:01 PM</fit-text><fit-text w="70">15-Dec-22</fit-text></div><div class="n"><ui-icon name="note"></ui-icon><div class="bd">2</div></div><div class="end"></div></div>
<div class="tip"><fit-text w="46">eclipse</fit-text></div>`);

def('desktop-screen', () => `<style>:host{display:flex;flex-direction:column;width:1920px;height:1080px;overflow:hidden}
main{flex:1;display:flex;min-height:0}</style>
<chrome-tabs></chrome-tabs><address-bar></address-bar><bookmarks-bar></bookmarks-bar><figma-toolbar></figma-toolbar>
<main><left-panel></left-panel><design-canvas></design-canvas><inspect-panel></inspect-panel></main><task-bar></task-bar>`);
</script>
</body>
</html>
